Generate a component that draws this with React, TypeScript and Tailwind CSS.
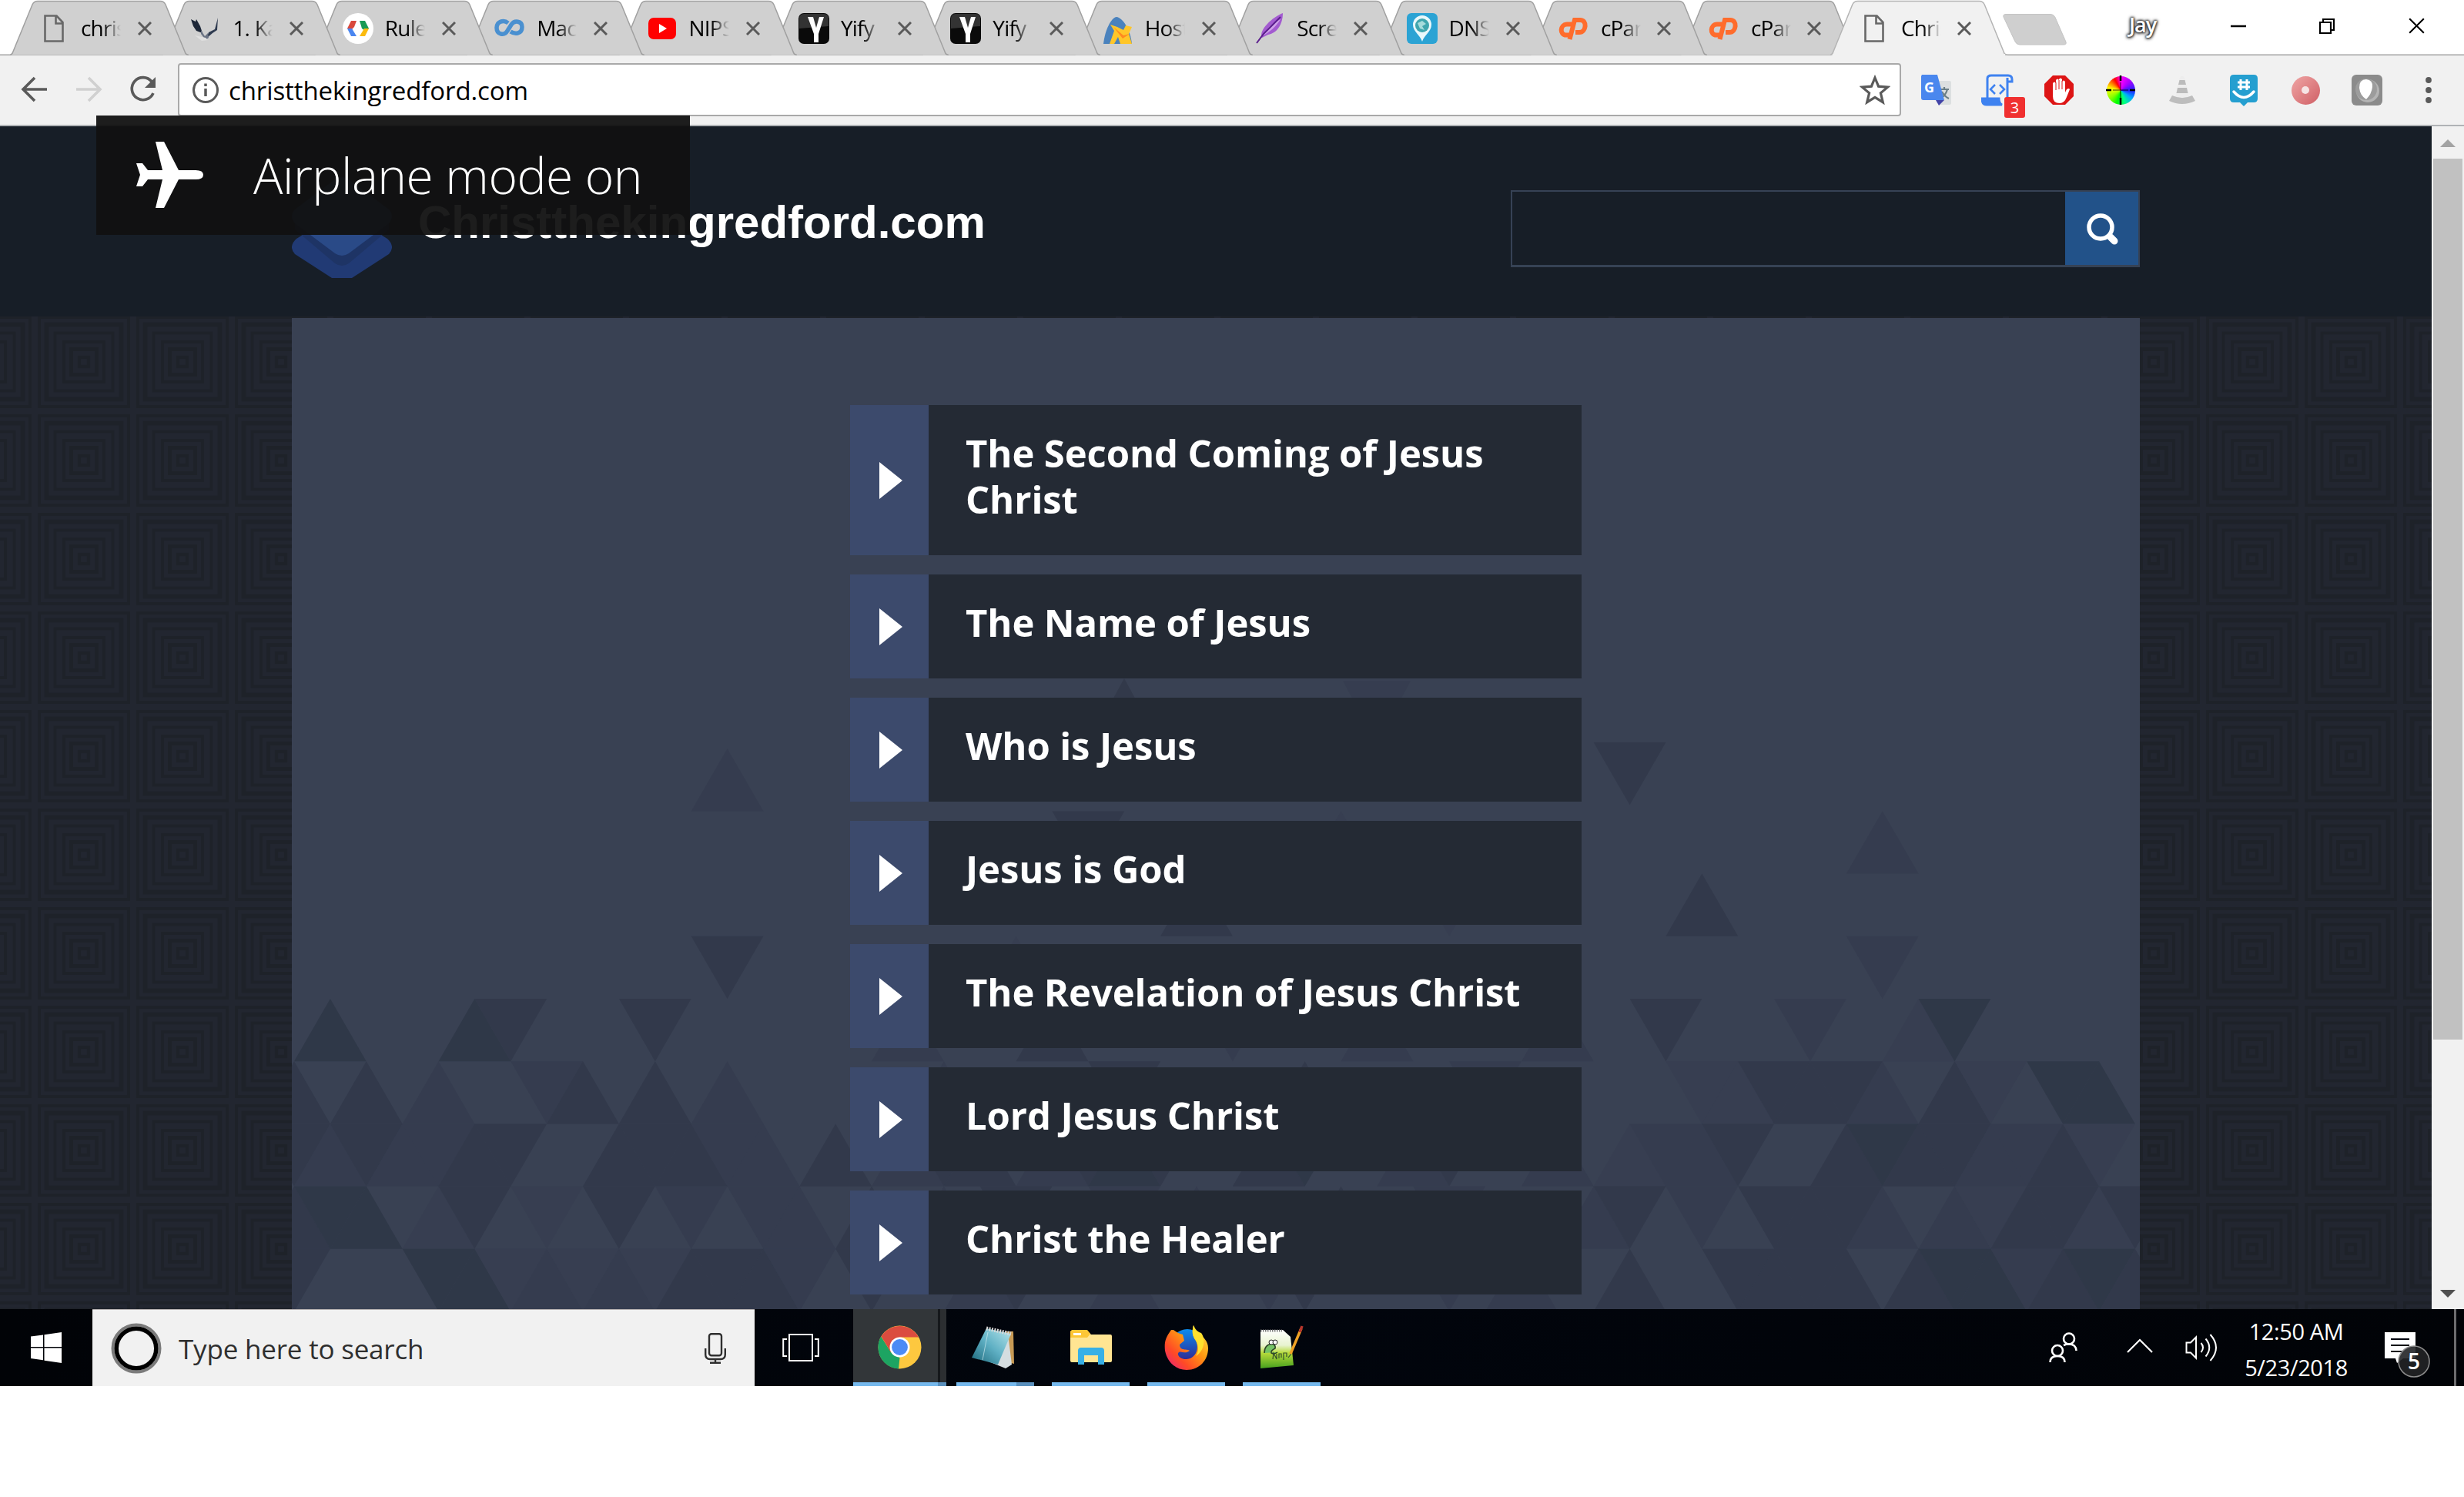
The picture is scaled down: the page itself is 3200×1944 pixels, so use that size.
import React from "react";

const SANS = "font-['Open_Sans','Noto_Sans',sans-serif]";

/* ---------- Tab strip ---------- */

const DocIcon = () => (
  <svg width="40" height="40" viewBox="0 0 40 40" fill="none" stroke="#686868" strokeWidth="2.6">
    <path d="M8.500 3.500h15l8 8.500v24.500h-23z M22.500 3.500v10h9" />
  </svg>
);
const WingIcon = () => (
  <svg width="40" height="40" viewBox="0 0 40 40">
    <path d="M1 8l6 3 1-3 5 9 3 9-8-3-4-6z" fill="#1d2738" />
    <path d="M36 6l-1 16-6 4-8 7 3-8 8-4z" fill="#2f3b50" />
    <path d="M14 22l5 8 4-4 1 6-4 3-6-8z" fill="#6a7384" />
    <path d="M6 29l9 7 8-1-3-3z" fill="#e0e0e0" />
  </svg>
);
const DevIcon = () => (
  <svg width="40" height="40" viewBox="0 0 40 40">
    <circle cx="20" cy="20" r="20" fill="#fff" />
    <path d="M11 10h7l-3 8-4 4-5-2z" fill="#d9483b" />
    <path d="M6 20h6l6 10h-7z" fill="#4a86f0" />
    <path d="M22 10h7l5 10-5 3-4-3z" fill="#1a9a55" />
    <path d="M28 20h6l-5 10h-7z" fill="#fbbb0f" />
  </svg>
);
const InfinityIcon = () => (
  <svg width="40" height="40" viewBox="0 0 40 40" fill="none" stroke="#4a90d0" strokeWidth="5.500">
    <path d="M18 13c-6-5-15-2-15 6 0 9 10 11 14 4l5-8c4-6 14-5 14 3 0 9-9 10-15 6" />
  </svg>
);
const TubeIcon = () => (
  <svg width="40" height="40" viewBox="0 0 40 40">
    <rect x="2" y="6" width="36" height="28" rx="7" fill="#f00" />
    <path d="M16 14l10 6-10 6z" fill="#fff" />
  </svg>
);
const YIcon = () => (
  <svg width="40" height="40" viewBox="0 0 40 40">
    <rect width="40" height="40" rx="7" fill="#0a0a0a" />
    <path d="M1 20V7q0-6 6-6h26q6 0 6 6v10z" fill="#333" />
    <path d="M12 5h7l4 14 4-14h6l-7 22v11h-6V27z" fill="#fff" />
  </svg>
);
const HostIcon = () => (
  <svg width="40" height="40" viewBox="0 0 40 40">
    <path d="M1 40c2-18 10-34 17-35 8 1 18 16 20 35z" fill="#4a82bd" />
    <path d="M10 15l9 3 8 4 3-6 8 2-4 9 4 13H23l-3-9-5 9h-6l6-17z" fill="#ffc629" />
    <path d="M14 18l13 11 8-2-9 6z" fill="#ff8a1f" />
  </svg>
);
const FeatherIcon = () => (
  <svg width="40" height="40" viewBox="0 0 40 40">
    <path d="M37 0c0 14-7 26-19 28l-8 4C5 22 24 5 37 0z" fill="#a35bd0" />
    <path d="M34 8C28 18 20 24 12 29c3-9 12-16 22-21z" fill="#cfa3ea" />
    <path d="M34 5L12 27 3 39" fill="none" stroke="#5b1f8d" strokeWidth="2" />
  </svg>
);
const DnsIcon = () => (
  <svg width="40" height="40" viewBox="0 0 40 40">
    <rect width="40" height="40" rx="6" fill="#2ba3d4" />
    <path d="M20 37C17 28 8 24 8 15a12 12 0 0 1 24 0c0 9-9 13-12 22z" fill="#e9f8fb" />
    <circle cx="20" cy="16" r="9" fill="#3fa6ae" />
    <path d="M14 13l6-3 5 4-5 3 3 5-6-2z" fill="#a7dcdc" />
  </svg>
);
const CpIcon = () => (
  <svg width="40" height="40" viewBox="0 0 40 40" fill="none" stroke="#ff6c2c" strokeWidth="6">
    <path d="M17 14.500h-6c-9 0-10 14-1 14h5" />
    <path d="M14.500 34l6.500-25h7c10 0 8 16-1 16h-5" />
  </svg>
);

const CloseX = ({ s = 18, c = "#5a5a5a", w = 3 }: { s?: number; c?: string; w?: number }) => (
  <svg width={s} height={s} viewBox="0 0 18 18" stroke={c} strokeWidth={w} fill="none">
    <path d="M1 1l16 16M17 1L1 17" />
  </svg>
);

const tabs: { icon: React.ReactNode; text: string }[] = [
  { icon: <DocIcon />, text: "chris" },
  { icon: <WingIcon />, text: "1. Ka" },
  { icon: <DevIcon />, text: "Rules" },
  { icon: <InfinityIcon />, text: "Mac" },
  { icon: <TubeIcon />, text: "NIPS" },
  { icon: <YIcon />, text: "Yify" },
  { icon: <YIcon />, text: "Yify" },
  { icon: <HostIcon />, text: "Host" },
  { icon: <FeatherIcon />, text: "Scre" },
  { icon: <DnsIcon />, text: "DNS" },
  { icon: <CpIcon />, text: "cPan" },
  { icon: <CpIcon />, text: "cPan" },
  { icon: <DocIcon />, text: "Chris" },
];

function Tab({ icon, text, index }: { icon: React.ReactNode; text: string; index: number }) {
  const active = index === 12;
  const narrow = index >= 10;
  return (
    <div
      className={`relative h-[72px] shrink-0 ${narrow ? "w-[195px]" : "w-[197.4px]"}`}
      style={{ zIndex: active ? 30 : 20 - index }}
    >
      <svg className="absolute top-0 left-0" width={narrow ? 232 : 234} height="72" viewBox="0 0 234 72" preserveAspectRatio="none">
        <path
          d="M0 71.500Q3 71 4 67L29 6Q31 1.500 36 1.500H195Q200 1.500 202 6L227 67Q228 71 232 71.500"
          fill={active ? "#f1f1f1" : "#d0d0d0"}
          stroke={active ? "#b4b4b4" : "#a0a0a0"}
          strokeWidth="1.500"
        />
        {active && <path d="M3 71h226" stroke="#f1f1f1" strokeWidth="2" />}
      </svg>
      <div className="relative flex h-[74px] items-center pl-[37px]">
        <div className="h-10 w-10 shrink-0">{icon}</div>
        <div className="mb-0.5 ml-[15px] w-[52px] shrink-0 overflow-hidden text-[28px] leading-[40px] tracking-[-0.8px] whitespace-nowrap text-black [mask-image:linear-gradient(to_right,black_55%,transparent_100%)]">
          {text}
        </div>
        <div className={`shrink-0 ${narrow ? "ml-[21px]" : "ml-[22px]"}`}>
          <CloseX />
        </div>
      </div>
    </div>
  );
}

function TabStrip() {
  return (
    <div className="relative flex h-[72px] shrink-0 bg-white pl-[13px] shadow-[inset_0_-1.5px_0_#a4a4a4]">
      {tabs.map((t, i) => (
        <Tab key={i} icon={t.icon} text={t.text} index={i} />
      ))}
      <svg className="mt-[17px] ml-[28px] shrink-0" width="86" height="43" viewBox="0 0 86 43">
        <path d="M5 1.500h58q4 0 6 4l14 32q1 3.500-3 3.500H23q-4 0-6-4L2 5q-1-3.500 3-3.500z" fill="#cfcfcf" stroke="#c4c4c4" />
      </svg>
      <div className="mt-[12px] ml-[79px] w-[44px] text-[27px] leading-[40px] font-semibold tracking-[-1px] text-white [text-shadow:0_0_3px_#222,0_0_3px_#222,0_1px_4px_#333,0_0_5px_#555]">
        Jay
      </div>
      <svg className="mt-[22px] ml-[87px] shrink-0" width="22" height="24" viewBox="0 0 22 24">
        <path d="M1 12h20" stroke="#000" strokeWidth="2.500" />
      </svg>
      <svg className="mt-[22px] ml-[93px] shrink-0" width="22" height="24" viewBox="0 0 22 24" fill="none" stroke="#000" strokeWidth="2.200">
        <path d="M2 7h14v14H2z M6 7V3h14v14h-4" />
      </svg>
      <div className="mt-[23px] ml-[95px] shrink-0">
        <CloseX s={21} c="#000" w={1.8} />
      </div>
    </div>
  );
}

/* ---------- Toolbar ---------- */

const Translate = () => (
  <svg width="40" height="42" viewBox="0 0 40 42">
    <path d="M16 9h22q2 0 2 2v27q0 2-2 2H24z" fill="#dcdfe0" />
    <path d="M24 20h13M31 17v3M35 20q-2 8-9 12M28 23q3 6 9 9" stroke="#6b7f86" strokeWidth="2.200" fill="none" />
    <path d="M2 1h20l9 33H4q-3 0-3-3V3z" fill="#4a87ee" />
    <path d="M20 34h11l-7 7z" fill="#4244a8" />
    <text x="5" y="24" fontSize="18" fontWeight="700" fill="#fff" fontFamily="Open Sans">G</text>
  </svg>
);
const ScriptIcon = () => (
  <svg width="42" height="42" viewBox="0 0 42 42" fill="none" stroke="#3f82f0" strokeWidth="3">
    <path d="M8 31V6q0-4 5-4h22q5 0 5 5v3h-6V37M34 9V5" />
    <path d="M1 32h22q0 6 4 8H7q-6 0-6-8z" fill="#3f82f0" />
    <path d="M18 14l-6 6 6 6M24 14l6 6-6 6" strokeWidth="2.500" />
  </svg>
);
const HandIcon = () => (
  <svg width="40" height="40" viewBox="0 0 40 40">
    <path d="M12 1h16l11 11v16L28 39H12L1 28V12z" fill="#dd1515" />
    <path d="M12 21V11q2-3 4 0V7q2-3 4 0V6q2-3 4 0v3q2-3 4 0v14l2-4q3-2 4 0l-4 10q-3 8-9 8-9 0-9-9z" fill="#fff" />
    <path d="M16 10v10M20 7v12M24 8v11" stroke="#dd1515" strokeWidth="1" />
  </svg>
);
const Cone = () => (
  <svg width="36" height="40" viewBox="0 0 36 40">
    <path d="M18 2q3 0 4 5l5 22H9l5-22q1-5 4-5z" fill="#ededed" />
    <path d="M14.500 7h7l1.500 6h-10zM12 17h12l1.500 7h-15z" fill="#bbb" />
    <path d="M5 27q13 6 26 0l4 7q-17 8-34 0z" fill="#bdbdbd" />
  </svg>
);
const GroupMe = () => (
  <svg width="38" height="42" viewBox="0 0 38 42">
    <path d="M6 1h26q5 0 5 5v26q0 5-5 5H24l-5 5-5-5H6q-5 0-5-5V6q0-5 5-5z" fill="#259fd0" />
    <path d="M15 7v14M23 7v14M11 11h16M11 17h16" stroke="#fff" strokeWidth="3" />
    <path d="M6 23q13 15 26 0" stroke="#fff" strokeWidth="3.500" fill="none" strokeLinecap="round" />
  </svg>
);

function Ext({ children }: { children: React.ReactNode }) {
  return <div className="relative flex h-11 w-20 shrink-0 items-center justify-center">{children}</div>;
}

function Toolbar() {
  return (
    <div className="flex h-[92px] shrink-0 items-center border-b-2 border-[#b0b3b6] bg-[#f1f1f1] pl-[27px]">
      <svg className="mb-0.5 shrink-0" width="180" height="40" viewBox="0 0 180 40" fill="none" stroke="#5a5a5a" strokeWidth="3.600">
        <path d="M34 20H4M18 5L3 20l15 15" />
        <path d="M72 20h30M88 5l15 15-15 15" stroke="#d0d0d0" />
        <path d="M170 10A14.500 14.500 0 1 0 172 25" />
        <path d="M175 4v14h-14z" fill="#5a5a5a" stroke="none" />
      </svg>
      <div className="mb-px ml-[24px] flex h-[69px] w-[2238px] shrink-0 items-center rounded-[4px] border-2 border-[#a9a9a9] bg-white pl-4">
        <svg width="36" height="36" viewBox="0 0 36 36" fill="none" stroke="#5a5a5a" strokeWidth="3">
          <circle cx="18" cy="18" r="15.500" />
          <path d="M18 16v10M18 9.500v3.500" strokeWidth="3.500" />
        </svg>
        <div className="mt-0.5 ml-[12px] w-[2118px] shrink-0 text-[33px] leading-[48px] tracking-[-0.1px] text-black">christthekingredford.com</div>
        <svg className="shrink-0" width="40" height="40" viewBox="0 0 40 40" fill="none" stroke="#5a5a5a" strokeWidth="3.200">
          <path d="M20 4l4.600 11.200 12 .9-9.200 7.800 2.900 11.800L20 29.300 9.700 35.700l2.900-11.800-9.200-7.800 12-.9z" />
        </svg>
      </div>
      <div className="ml-[5px] flex shrink-0">
        <Ext>
          <Translate />
        </Ext>
        <Ext>
          <ScriptIcon />
          <div className="absolute top-[31px] left-[49px] flex h-[27px] w-[27px] items-center justify-center rounded-[3px] bg-[#f03030] text-[20px] leading-none text-white">3</div>
        </Ext>
        <Ext>
          <HandIcon />
        </Ext>
        <Ext>
          <div className="flex h-[37px] w-[37px] items-center justify-center rounded-full bg-[conic-gradient(#f0f,#a0f,#22f_25%,#0af,#0f8_45%,#0f0,#8f0_65%,#ff0_78%,#f80,#f00_92%,#f0f)]">
            <svg className="shrink-0" width="40" height="40" viewBox="0 0 40 40" stroke="#000" strokeWidth="2.500">
              <path d="M20 1v7M20 30v9M1 20h7M32 20h7" />
              <path d="M20 10v20M10 20h20" strokeWidth=".8" />
            </svg>
          </div>
        </Ext>
        <Ext>
          <Cone />
        </Ext>
        <Ext>
          <GroupMe />
        </Ext>
        <Ext>
          <div className="flex h-[37px] w-[37px] items-center justify-center rounded-full bg-linear-to-br from-[#efa5a5] to-[#cf5f66]">
            <div className="h-2.5 w-2.5 rounded-full bg-[#f6e4e4]" />
          </div>
        </Ext>
        <Ext>
          <svg width="40" height="40" viewBox="0 0 40 40">
            <rect width="40" height="40" rx="6" fill="#8b8b8b" />
            <circle cx="21" cy="21" r="15" fill="#b4b4b4" />
            <circle cx="19" cy="19" r="14" fill="#9c9c9c" />
            <path d="M10 17Q10 6 19 6q9 1 8 10-1 9-8 16-8-5-9-15z" fill="#fff" />
          </svg>
        </Ext>
        <Ext>
          <svg width="10" height="34" viewBox="0 0 10 34" fill="#5a5a5a">
            <circle cx="5" cy="4" r="3.900" />
            <circle cx="5" cy="17" r="3.900" />
            <circle cx="5" cy="30" r="3.900" />
          </svg>
        </Ext>
      </div>
    </div>
  );
}

/* ---------- Web page ---------- */

/* Background mosaic: [left vertex index, points up, shade 1 (dark) to 4 (faint)] */
type Tri = [number, 0 | 1, 1 | 2 | 3 | 4];
const mosaic: Record<string, Tri[]> = {
  "-4.1": [[36, 0, 2]],
  "-4": [[11, 1, 3]],
  "-3": [[21, 0, 2], [28, 1, 4], [43, 1, 3]],
  "-2": [[24, 1, 2], [31, 0, 4], [38, 1, 2]],
  "-1": [[11, 0, 2], [19, 1, 4], [43, 0, 3]],
  "0": [[0, 1, 1], [4, 1, 1], [5, 0, 2], [9, 0, 2], [16, 1, 3], [20, 1, 2], [25, 0, 3], [29, 1, 3], [34, 1, 3], [37, 0, 2], [41, 0, 3], [44, 1, 4], [45, 0, 1]],
  "1": [[-1, 1, 2], [1, 1, 2], [3, 1, 3], [6, 0, 3], [7, 1, 2], [9, 1, 2], [11, 1, 3], [17, 1, 3], [22, 0, 2], [27, 1, 2], [32, 0, 3], [38, 0, 4], [39, 1, 4], [40, 0, 2], [41, 1, 2], [42, 0, 2], [43, 1, 3], [45, 1, 2], [46, 0, 4], [48, 0, 1], [49, 1, 1]],
  "2": [[-1, 0, 2], [0, 1, 3], [1, 0, 2], [2, 1, 3], [3, 0, 3], [4, 1, 2], [5, 0, 2], [8, 1, 2], [9, 0, 2], [10, 1, 2], [11, 0, 3], [12, 1, 3], [14, 1, 2], [16, 1, 3], [17, 0, 2], [18, 1, 2], [20, 1, 3], [21, 0, 2], [22, 1, 1], [23, 0, 2], [26, 1, 2], [27, 0, 1], [30, 1, 3], [31, 0, 2], [34, 1, 3], [36, 1, 4], [37, 0, 3], [38, 1, 3], [39, 0, 2], [42, 1, 2], [43, 0, 1], [44, 1, 2], [45, 0, 2], [46, 1, 3], [47, 0, 3], [48, 1, 2], [49, 0, 4]],
  "3": [[-1, 1, 2], [0, 0, 1], [1, 1, 1], [3, 1, 4], [4, 0, 2], [6, 0, 4], [8, 0, 2], [10, 0, 3], [12, 0, 3], [13, 1, 3], [15, 1, 2], [17, 1, 3], [19, 0, 2], [22, 0, 3], [24, 1, 3], [28, 1, 2], [31, 0, 3], [35, 1, 3], [36, 0, 2], [38, 0, 3], [40, 0, 2], [41, 1, 2], [42, 0, 2], [43, 1, 3], [45, 1, 3], [46, 0, 4], [47, 1, 2], [48, 0, 2], [49, 1, 4], [50, 0, 2]],
  "4": [[-1, 0, 2], [3, 0, 1], [4, 1, 1], [5, 0, 4], [6, 1, 3], [7, 0, 4], [8, 1, 3], [9, 0, 4], [10, 1, 2], [11, 0, 2], [12, 1, 2], [13, 0, 3], [15, 0, 2], [18, 1, 3], [19, 0, 2], [22, 1, 3], [26, 0, 3], [27, 0, 2], [31, 0, 3], [33, 1, 3], [36, 1, 2], [39, 0, 2], [40, 1, 2], [41, 0, 2], [42, 1, 2], [44, 1, 2], [45, 0, 1], [46, 1, 1], [47, 0, 3], [48, 1, 2], [49, 0, 1], [50, 1, 2]],
};
const shades = ["", "#2f3848", "#32394b", "#353c4f", "#373e51"];

function Mosaic() {
  const U = 46.88;
  const H = 81.2;
  return (
    <svg className="absolute inset-0" width="2400" height="1287" viewBox="379 413 2400 1287">
      <path d="M1460 881l18 33h-36z" fill="#32394a" />
      <path d="M1744 884h88l-16 30h-56z" fill="#363d50" />
      {Object.entries(mosaic).map(([row, tris]) =>
        tris.map(([k, up, s]) => {
          const y = 1297 + Number(row) * H;
          const x = 382 + k * U;
          const pts = up
            ? `${x},${y + H} ${x + 2 * U},${y + H} ${x + U},${y}`
            : `${x},${y} ${x + 2 * U},${y} ${x + U},${y + H}`;
          return <polygon key={row + ":" + k + ":" + up} points={pts} fill={shades[s]} />;
        })
      )}
    </svg>
  );
}

function SquaresPattern() {
  return (
    <svg className="absolute inset-0" width="3158" height="1289">
      <defs>
        <pattern id="squares" patternUnits="userSpaceOnUse" x="45" y="-5" width="128" height="128">
          <rect width="128" height="128" fill="#222630" />
          <g fill="none" stroke="#1e2229">
            <rect x="6" y="6" width="116" height="116" strokeWidth="4" />
            <rect x="15.500" y="15.500" width="97" height="97" strokeWidth="6" />
            <rect x="26.500" y="26.500" width="75" height="75" strokeWidth="4" />
            <rect x="38" y="38" width="52" height="52" strokeWidth="4" />
            <rect x="47.500" y="47.500" width="33" height="33" strokeWidth="5" />
            <rect x="58" y="58" width="12" height="12" strokeWidth="4.500" />
          </g>
        </pattern>
      </defs>
      <rect width="3158" height="1289" fill="url(#squares)" />
    </svg>
  );
}

const topics = [
  "The Second Coming of Jesus Christ",
  "The Name of Jesus",
  "Who is Jesus",
  "Jesus is God",
  "The Revelation of Jesus Christ",
  "Lord Jesus Christ",
  "Christ the Healer",
];

function Topic({ text }: { text: string }) {
  return (
    <div className="flex w-[950px] bg-[#242a34]">
      <div className="flex w-[102px] shrink-0 items-center justify-center bg-[#3c4a6c] pl-1">
        <svg className="mt-px" width="30" height="48" viewBox="0 0 30 48">
          <path d="M0 0l30 24L0 48z" fill="#fff" />
        </svg>
      </div>
      <div className="pt-[32px] pr-[40px] pb-[43px] pl-[48px] text-[49px] leading-[60px] font-bold tracking-[-0.1px] text-white">{text}</div>
    </div>
  );
}

function WebPage() {
  return (
    <div className="flex h-[1536px] shrink-0">
      <div className="flex w-[3158px] flex-col overflow-hidden">
        <header className="flex h-[247px] shrink-0 bg-[#171e27] px-[379px]">
          <svg className="mt-[66px] shrink-0" width="130" height="131" viewBox="0 0 130 131">
            <path d="M6 80Q-5 90 4 100L52 131H78L126 100Q135 90 124 80L65 44z" fill="#213a74" />
            <path d="M4 68L56 112Q65 118 74 112L126 68V50H4z" fill="#1e3465" />
            <path d="M4 42Q-4 50 4 60L56 99Q65 105 74 99L126 60Q134 50 126 42L74 3Q65-3 56 3z" fill="#2a4a87" />
          </svg>
          <div className="mt-[90px] ml-[34px] w-[1419px] font-['Liberation_Sans',Arial,sans-serif] text-[60px] leading-[69px] font-bold text-white">
            Christthekingredford.com
          </div>
          <div className="mt-[83px] flex h-[100px] w-[817px] shrink-0 border-2 border-b-[3px] border-[#364255]">
            <div className="w-[718px]" />
            <div className="flex w-[95px] items-center justify-center bg-[#225289]">
              <svg width="42" height="42" viewBox="0 0 42 42" fill="none" stroke="#fff">
                <circle cx="19" cy="19" r="15" strokeWidth="5.500" />
                <path d="M32 32l5 5" strokeWidth="9" strokeLinecap="round" />
              </svg>
            </div>
          </div>
        </header>
        <main className="relative h-[1289px] pt-0.5">
          <SquaresPattern />
          <div className="relative mx-auto flex h-[1287px] w-[2400px] flex-col items-center gap-[25px] bg-[#394153] pt-[113px]">
            <Mosaic />
            {topics.map((t) => (
              <div key={t} className="relative">
                <Topic text={t} />
              </div>
            ))}
          </div>
        </main>
      </div>
      <div className="flex w-[42px] flex-col items-center bg-[#f1f1f1]">
        <svg className="mt-[17px]" width="20" height="10" viewBox="0 0 20 10">
          <path d="M10 0l10 10H0z" fill="#a3a3a3" />
        </svg>
        <div className="mt-[15px] h-[1144px] w-[38px] bg-[#c1c1c1]" />
        <svg className="mt-auto mb-[15px]" width="20" height="10" viewBox="0 0 20 10">
          <path d="M0 0h20L10 10z" fill="#505050" />
        </svg>
      </div>
    </div>
  );
}

function Toast() {
  return (
    <div className="absolute top-[150px] left-[125px] z-40 flex h-[155px] w-[771px] bg-[#111111]/95">
      <svg className="mt-[33px] ml-[51px] shrink-0" width="90" height="88" viewBox="0 0 90 88" fill="#fff">
        <path d="M26 1h11l19 37h22q10 0 10 6t-10 6H56L37 87H26l9-37H16l-7 9H1l5-15L1 29h8l7 9h19z" />
      </svg>
      <div className="mt-[34px] ml-[63px] text-[64px] leading-[88px] font-light tracking-[-0.5px] whitespace-nowrap text-white">Airplane mode on</div>
    </div>
  );
}

/* ---------- Taskbar ---------- */

const Chrome = () => (
  <svg width="57" height="57" viewBox="0 0 57 57">
    <circle cx="28.500" cy="28.500" r="28" fill="#fdc83f" />
    <path d="M4.200 14.500L17 35l11.500 7L27 56.500A28 28 0 0 1 4.200 14.500z" fill="#1da462" />
    <path d="M28.500 15.500H53a28 28 0 0 0-48.500-1L17 35z" fill="#db4c3f" />
    <circle cx="28.500" cy="28.500" r="13" fill="#fff" />
    <circle cx="28.500" cy="28.500" r="10.400" fill="#4c8bf5" />
  </svg>
);
const Notepad = () => (
  <svg className="mr-1.5" width="57" height="56" viewBox="0 0 57 56">
    <defs>
      <linearGradient id="np" x1="1" y1="0" x2="0" y2="1">
        <stop offset="0" stopColor="#b8e6ec" />
        <stop offset=".5" stopColor="#5fb0c4" />
        <stop offset="1" stopColor="#1a6578" />
      </linearGradient>
    </defs>
    <path d="M46 7h9l1 42-8-2z" fill="#c79a55" />
    <path d="M48 10l5 40-8 5-27-11z" fill="#d5dde0" />
    <path d="M20 3l32 7-17 40L1 41z" fill="url(#np)" />
    <path d="M22 8L15 44" stroke="#dff4f7" strokeWidth="1" opacity=".6" />
    <path d="M20 3l32 7" stroke="#d8d8d8" strokeWidth="5" strokeDasharray="2 1.500" />
  </svg>
);
const Folder = () => (
  <svg width="54" height="46" viewBox="0 0 54 46">
    <path d="M2 1h20l5 5h25q2 0 2 2v32q0 2-2 2H2q-2 0-2-2V3q0-2 2-2z" fill="#ffe592" />
    <path d="M2 0h20l4 5-4 5H0V2z" fill="#fcc636" />
    <rect x="4" y="4" width="10" height="3" fill="#fff" />
    <path d="M10 45V27q0-4 4-4h26q4 0 4 4v18h-8V33H18v12z" fill="#38b0e6" />
  </svg>
);
const Firefox = () => (
  <svg width="58" height="60" viewBox="0 0 58 60">
    <defs>
      <linearGradient id="ff1" x1="1" y1="0" x2="0" y2="1">
        <stop offset="0" stopColor="#fff04a" />
        <stop offset=".4" stopColor="#ff9a12" />
        <stop offset=".7" stopColor="#ff4a26" />
        <stop offset="1" stopColor="#e4178e" />
      </linearGradient>
      <linearGradient id="ff2" x1="0" y1="0" x2="0" y2="1">
        <stop offset="0" stopColor="#0a8cf0" />
        <stop offset="1" stopColor="#33208a" />
      </linearGradient>
    </defs>
    <circle cx="30" cy="28" r="22" fill="url(#ff2)" />
    <path d="M38 1c-2 8-2 13 3 20 5 10 0 23-12 24-10 0-13-7-10-9 4-2 8 3 14-2-3-3-13 1-13-8l6-5-2-8c-5-1-8-3-12-6L9 7C1 18 0 24 1 34c3 15 14 25 28 25 17 0 28-13 28-28 0-10-6-13-9-18q-1 4 0 6Q41 9 38 1z" fill="url(#ff1)" />
    <path d="M38 1c-2 8-2 13 3 20 4 7 4 14 0 20 13-8 12-24 7-30Q41 9 38 1z" fill="#ffe12e" />
  </svg>
);
const NotepadPP = () => (
  <svg width="57" height="58" viewBox="0 0 57 58">
    <defs>
      <linearGradient id="npp" x1="0" y1="0" x2="0" y2="1">
        <stop offset="0" stopColor="#fff" />
        <stop offset=".4" stopColor="#e8f3d0" />
        <stop offset=".6" stopColor="#b6da3a" />
        <stop offset="1" stopColor="#46a01e" />
      </linearGradient>
    </defs>
    <path d="M1 6h29l10 9 4 37-43 4z" fill="url(#npp)" />
    <path d="M1 7h28" stroke="#777" strokeWidth="3" strokeDasharray="1.500 1.500" />
    <path d="M6 36q0-11 10-12 5 1 4 6-6 3-5 6 4 2 8-1" fill="#74c266" stroke="#2c4426" strokeWidth="1.500" />
    <circle cx="15" cy="22" r="3" fill="#fff" stroke="#222" />
    <circle cx="20" cy="22" r="3" fill="#fff" stroke="#222" />
    <path d="M17 44l1-8 4 8v-7M25 43v-6h3v5M31 45V36h4v5M37 42l4-5" stroke="#34502c" strokeWidth="1.200" fill="none" />
    <path d="M54 4L40 37" stroke="#f0a326" strokeWidth="3.500" />
    <path d="M55 1l-3 8" stroke="#b8362c" strokeWidth="3.500" />
  </svg>
);

function TaskbarApp({ icon, split }: { icon: React.ReactNode; split?: boolean }) {
  return (
    <div className="flex w-[101px] shrink-0 flex-col">
      <div className="flex h-[95px] items-center justify-center">
        <div className="mt-1">{icon}</div>
      </div>
      <div className="flex h-[5px] bg-[#76b9ed]">{split && <div className="ml-auto w-[23px] bg-[#5a90bd]" />}</div>
    </div>
  );
}

function Taskbar() {
  return (
    <div className="flex h-[100px] shrink-0 bg-linear-to-r from-[#010307] via-[#01050d] to-[#010307]">
      <div className="flex w-[120px] shrink-0 items-center justify-center">
        <svg width="40" height="40" viewBox="0 0 40 40" fill="#fff">
          <path d="M0 5.600L16 3.400V19H0zM17.500 3.200L40 0v19H17.500zM0 20.500h16v15.700L0 34zM17.500 20.500H40V40l-22.500-3.200z" />
        </svg>
      </div>
      <div className="flex w-[860px] shrink-0 items-center border-t border-[#b5b0b0] bg-[#f1f1f1] pl-6">
        <svg width="66" height="66" viewBox="0 0 66 66" fill="none">
          <circle cx="33" cy="33" r="30.500" stroke="#7b7b7b" strokeWidth="4" />
          <circle cx="33" cy="33" r="25.800" stroke="#000" strokeWidth="5.500" />
        </svg>
        <div className="mt-0.5 ml-[22px] w-[683px] text-[35px] leading-[48px] tracking-[-0.2px] text-[#2f2f2f]">Type here to search</div>
        <svg width="28" height="40" viewBox="0 0 28 40" fill="none" stroke="#2f2f2f" strokeWidth="2.400">
          <rect x="6" y="1.200" width="16" height="28" rx="3" />
          <path d="M1.200 20v8q0 6 6 6h13.600q6 0 6-6v-8M14 34v4M7 38.800h14" />
        </svg>
      </div>
      <div className="flex w-[120px] shrink-0 items-center justify-center">
        <svg width="48" height="38" viewBox="0 0 48 38" fill="none" stroke="#fff" strokeWidth="2">
          <path d="M9 2h30v34H9zM6 8H1.200v22H6M42 8h4.800v22H42" />
        </svg>
      </div>
      <div className="ml-2 flex w-[121px] shrink-0 flex-col">
        <div className="flex h-[95px]">
          <div className="flex w-[110px] items-center bg-[#323639] pl-8">
            <div className="mt-1">
              <Chrome />
            </div>
          </div>
          <div className="w-[3px] bg-[#15181b]" />
          <div className="w-2 bg-[#2b2e31]" />
        </div>
        <div className="flex h-[5px] bg-[#76b9ed]">
          <div className="ml-auto w-[11px] bg-[#5a90bd]" />
        </div>
      </div>
      <div className="ml-[13px] flex gap-[23px]">
        <TaskbarApp icon={<Notepad />} split />
        <TaskbarApp icon={<Folder />} />
        <TaskbarApp icon={<Firefox />} />
        <TaskbarApp icon={<NotepadPP />} />
      </div>
      <div className="ml-auto flex shrink-0">
        <svg className="mt-[30px]" width="38" height="40" viewBox="0 0 38 40" fill="none" stroke="#fff" strokeWidth="2.600">
          <circle cx="26" cy="8.500" r="7" />
          <circle cx="11" cy="24" r="7" />
          <path d="M1.500 39q0-8 9.500-8t9.500 8M19 17q3-1.500 7-1.500 9 0 9.500 8.500" />
        </svg>
        <svg className="mt-[38px] ml-[63px]" width="34" height="20" viewBox="0 0 34 20" fill="none" stroke="#fff" strokeWidth="2.200">
          <path d="M1 18L17 2l16 16" />
        </svg>
        <svg className="mt-[30px] ml-[42px]" width="42" height="40" viewBox="0 0 42 40" fill="none" stroke="#fff" strokeWidth="2">
          <path d="M1.500 13.500H7l7-7v27l-7-7H1.500z" />
          <path d="M20.500 14q5 6 0 12M26.500 8.500q9.500 11.500 0 23M32.500 3q15 17 0 34" />
        </svg>
        <div className="mt-[5px] ml-[23px] w-[158px] text-center text-[29px] leading-[47px] whitespace-nowrap text-white">
          <div className="tracking-[-0.4px]">12:50 AM</div>
          <div className="tracking-[-0.4px]">5/23/2018</div>
        </div>
        <div className="relative mt-[30px] ml-[36px] h-[60px] w-[60px]">
          <svg width="60" height="60" viewBox="0 0 60 60">
            <path d="M0 0h40v34H24l-8 6-2-6H0z" fill="#fff" />
            <path d="M8 9h24M8 17h24M8 25h16" stroke="#01050d" strokeWidth="2" />
            <circle cx="38" cy="38" r="20" fill="#222426" fillOpacity=".9" stroke="#8d8d8d" strokeWidth="1.500" />
            <text x="38" y="48" textAnchor="middle" fontSize="28" fontWeight="600" fill="#fff">5</text>
          </svg>
        </div>
        <div className="ml-[30px] h-[100px] w-[3px] bg-[#6c6c6e]" />
        <div className="w-2.5" />
      </div>
    </div>
  );
}

export default function App() {
  return (
    <div className={`relative flex h-[1944px] w-[3200px] flex-col overflow-hidden bg-white ${SANS}`}>
      <TabStrip />
      <Toolbar />
      <WebPage />
      <Taskbar />
      <Toast />
    </div>
  );
}
